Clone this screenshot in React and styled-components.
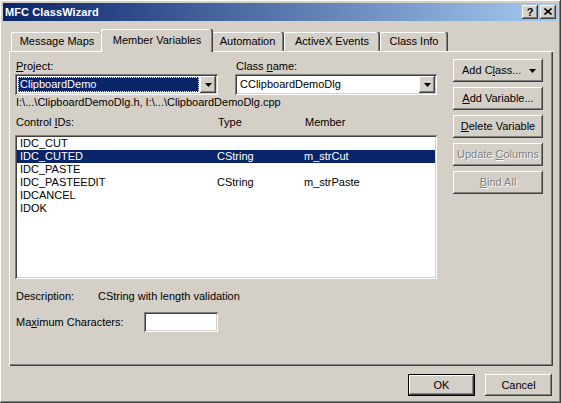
import React from 'react';
import styled, { createGlobalStyle, css } from 'styled-components';

const face = '#d4d0c8';
const navy = '#0a246a';

const raised = css`
    box-shadow: inset -1px -1px #404040, inset 1px 1px #ffffff, inset -2px -2px #808080, inset 2px 2px ${face};
`;

const sunken = css`
    box-shadow: inset 1px 1px #808080, inset -1px -1px #ffffff, inset 2px 2px #404040, inset -2px -2px ${face};
`;

const GlobalStyle = createGlobalStyle`
    html, body {
        margin: 0;
        padding: 0;
        background: ${face};
    }
    u {
        text-decoration: underline;
        text-underline-offset: 1px;
    }
`;

const Window = styled.div`
    width: 561px;
    height: 403px;
    box-sizing: border-box;
    padding: 3px;
    background: ${face};
    ${raised}
    display: flex;
    flex-direction: column;
    font-family: "Liberation Sans", Arial, sans-serif;
    font-size: 11px;
    color: #000;
`;

const TitleBar = styled.div`
    height: 18px;
    flex: 0 0 18px;
    display: flex;
    align-items: center;
    padding: 0 2px;
    background: linear-gradient(to right, ${navy}, #a6caf0);
`;

const Title = styled.span`
    color: #fff;
    font-weight: bold;
    font-size: 11px;
    letter-spacing: 0.1px;
`;

const CaptionButtons = styled.div`
    margin-left: auto;
    display: flex;
    gap: 2px;
`;

const CaptionButton = styled.div`
    width: 16px;
    height: 14px;
    background: ${face};
    ${raised}
    display: flex;
    align-items: center;
    justify-content: center;
    font-weight: bold;
    font-size: 11px;
    line-height: 14px;
    padding-bottom: 1px;
    box-sizing: border-box;
`;

const Body = styled.div`
    flex: 1;
    display: flex;
    flex-direction: column;
    padding: 8px 5px 0 6px;
`;

const TabStrip = styled.div`
    height: 22px;
    display: flex;
    align-items: flex-end;
    padding-left: 2px;
    position: relative;
    z-index: 1;
`;

const Tab = styled.div`
    width: ${({ w, active }) => (active ? w + 4 : w)}px;
    height: ${({ active }) => (active ? 23 : 19)}px;
    margin: ${({ active }) => (active ? '0 -2px -1px -2px' : '0')};
    box-sizing: border-box;
    background: ${face};
    border-radius: 2px 2px 0 0;
    box-shadow: inset -1px 0 #404040, inset -2px 0 #808080, inset 1px 1px #ffffff;
    display: flex;
    align-items: flex-start;
    justify-content: center;
    padding-top: ${({ active }) => (active ? 5 : 3)}px;
    line-height: 13px;
    position: relative;
    z-index: ${({ active }) => (active ? 2 : 1)};
`;

const Panel = styled.div`
    height: 315px;
    flex: 0 0 315px;
    box-sizing: border-box;
    padding: 9px 10px 0 6px;
    box-shadow: inset 1px 1px #ffffff, inset -1px -1px #404040, inset -2px -2px #808080;
    display: flex;
    flex-direction: column;
`;

const TopSection = styled.div`
    display: flex;
`;

const LeftColumn = styled.div`
    width: 422px;
    display: flex;
    flex-direction: column;
`;

const RightColumn = styled.div`
    margin-left: auto;
    margin-top: -1px;
    width: 90px;
    display: flex;
    flex-direction: column;
    gap: 5px;
`;

const FieldsRow = styled.div`
    display: flex;
    gap: 17px;
`;

const Field = styled.div`
    width: ${({ w }) => w}px;
    display: flex;
    flex-direction: column;
`;

const Label = styled.div`
    line-height: 13px;
    height: 13px;
    margin-bottom: 1px;
    padding-left: ${({ indent }) => indent || 0}px;
`;

const Combo = styled.div`
    height: 21px;
    box-sizing: border-box;
    padding: 2px;
    background: #fff;
    ${sunken}
    display: flex;
`;

const ComboText = styled.div`
    flex: 1;
    margin: 1px;
    padding-left: 2px;
    line-height: 15px;
    background: ${({ selected }) => (selected ? navy : 'transparent')};
    color: ${({ selected }) => (selected ? '#fff' : '#000')};
    outline: ${({ selected }) => (selected ? '1px dotted #ffff80' : 'none')};
    outline-offset: -1px;
`;

const DropButton = styled.div`
    width: 16px;
    height: 17px;
    background: ${face};
    ${raised}
    display: flex;
    align-items: center;
    justify-content: center;
`;

const PathText = styled.div`
    margin-top: 1px;
    line-height: 13px;
    padding-left: 1px;
`;

const ColumnHeader = styled.div`
    margin-top: 7px;
    line-height: 13px;
    display: grid;
    grid-template-columns: 202px 87px 1fr;
    padding-left: 1px;
`;

const ListBox = styled.div`
    margin-top: 6px;
    height: 144px;
    box-sizing: border-box;
    padding: 2px;
    background: #fff;
    ${sunken}
`;

const ListRow = styled.div`
    height: 13px;
    line-height: 13px;
    display: grid;
    grid-template-columns: 197px 87px 1fr;
    padding-left: 3px;
    background: ${({ selected }) => (selected ? navy : 'transparent')};
    color: ${({ selected }) => (selected ? '#fff' : '#000')};
`;

const DescRow = styled.div`
    margin-top: 11px;
    line-height: 13px;
    display: grid;
    grid-template-columns: 82px 1fr;
    padding-left: 1px;
`;

const MaxRow = styled.div`
    margin-top: 9px;
    display: flex;
    align-items: center;
`;

const MaxLabel = styled.div`
    width: 128px;
    padding-left: 1px;
    line-height: 13px;
`;

const EditBox = styled.div`
    width: 74px;
    height: 20px;
    box-sizing: border-box;
    background: #fff;
    ${sunken}
`;

const Button = styled.div`
    width: ${({ w }) => w || 90}px;
    height: ${({ h }) => h || 23}px;
    box-sizing: border-box;
    background: ${face};
    ${raised}
    display: flex;
    align-items: center;
    justify-content: center;
    line-height: 13px;
    color: ${({ disabled }) => (disabled ? '#808080' : '#000')};
    text-shadow: ${({ disabled }) => (disabled ? '1px 1px #ffffff' : 'none')};
`;

const DefaultButton = styled(Button)`
    box-shadow: inset 0 0 0 1px #000, inset -2px -2px #404040, inset 2px 2px #ffffff, inset -3px -3px #808080, inset 3px 3px ${face};
`;

const MenuButton = styled(Button)`
    justify-content: space-between;
    padding: 0 7px 0 9px;
`;

const Footer = styled.div`
    margin-top: 8px;
    display: flex;
    justify-content: flex-end;
    gap: 10px;
    padding-right: 1px;
`;

const Arrow = () => (
    <svg width="7" height="4" viewBox="0 0 7 4">
        <path d="M0 0h7L3.5 4z" fill="#000" />
    </svg>
);

const CloseGlyph = () => (
    <svg width="8" height="7" viewBox="0 0 8 7">
        <path d="M0.5 0.5L7.5 6.5M7.5 0.5L0.5 6.5" stroke="#000" strokeWidth="1.6" />
    </svg>
);

const tabs = [
    { name: 'Message Maps', w: 92 },
    { name: 'Member Variables', w: 108, active: true },
    { name: 'Automation', w: 73 },
    { name: 'ActiveX Events', w: 96 },
    { name: 'Class Info', w: 68 },
];

const controls = [
    { id: 'IDC_CUT', type: '', member: '' },
    { id: 'IDC_CUTED', type: 'CString', member: 'm_strCut', selected: true },
    { id: 'IDC_PASTE', type: '', member: '' },
    { id: 'IDC_PASTEEDIT', type: 'CString', member: 'm_strPaste' },
    { id: 'IDCANCEL', type: '', member: '' },
    { id: 'IDOK', type: '', member: '' },
];

function App() {
    return (
        <>
            <GlobalStyle />
            <Window>
                <TitleBar>
                    <Title>MFC ClassWizard</Title>
                    <CaptionButtons>
                        <CaptionButton>?</CaptionButton>
                        <CaptionButton><CloseGlyph /></CaptionButton>
                    </CaptionButtons>
                </TitleBar>
                <Body>
                    <TabStrip>
                        {tabs.map((t) => (
                            <Tab key={t.name} w={t.w} active={t.active}>{t.name}</Tab>
                        ))}
                    </TabStrip>
                    <Panel>
                        <TopSection>
                            <LeftColumn>
                                <FieldsRow>
                                    <Field w={203}>
                                        <Label indent={1}><u>P</u>roject:</Label>
                                        <Combo>
                                            <ComboText selected>ClipboardDemo</ComboText>
                                            <DropButton><Arrow /></DropButton>
                                        </Combo>
                                    </Field>
                                    <Field w={202}>
                                        <Label indent={1}>Class <u>n</u>ame:</Label>
                                        <Combo>
                                            <ComboText>CClipboardDemoDlg</ComboText>
                                            <DropButton><Arrow /></DropButton>
                                        </Combo>
                                    </Field>
                                </FieldsRow>
                                <PathText>I:\...\ClipboardDemoDlg.h, I:\...\ClipboardDemoDlg.cpp</PathText>
                                <ColumnHeader>
                                    <span>Control <u>I</u>Ds:</span>
                                    <span>Type</span>
                                    <span>Member</span>
                                </ColumnHeader>
                                <ListBox>
                                    {controls.map((c) => (
                                        <ListRow key={c.id} selected={c.selected}>
                                            <span>{c.id}</span>
                                            <span>{c.type}</span>
                                            <span>{c.member}</span>
                                        </ListRow>
                                    ))}
                                </ListBox>
                            </LeftColumn>
                            <RightColumn>
                                <MenuButton>
                                    <span>Add C<u>l</u>ass...</span>
                                    <Arrow />
                                </MenuButton>
                                <Button><span><u>A</u>dd Variable...</span></Button>
                                <Button><span><u>D</u>elete Variable</span></Button>
                                <Button disabled><span>Update <u>C</u>olumns</span></Button>
                                <Button disabled><span><u>B</u>ind All</span></Button>
                            </RightColumn>
                        </TopSection>
                        <DescRow>
                            <span>Description:</span>
                            <span>CString with length validation</span>
                        </DescRow>
                        <MaxRow>
                            <MaxLabel>Ma<u>x</u>imum Characters:</MaxLabel>
                            <EditBox />
                        </MaxRow>
                    </Panel>
                    <Footer>
                        <DefaultButton w={67} h={22}>OK</DefaultButton>
                        <Button w={67} h={22}>Cancel</Button>
                    </Footer>
                </Body>
            </Window>
        </>
    );
}

export default App;
